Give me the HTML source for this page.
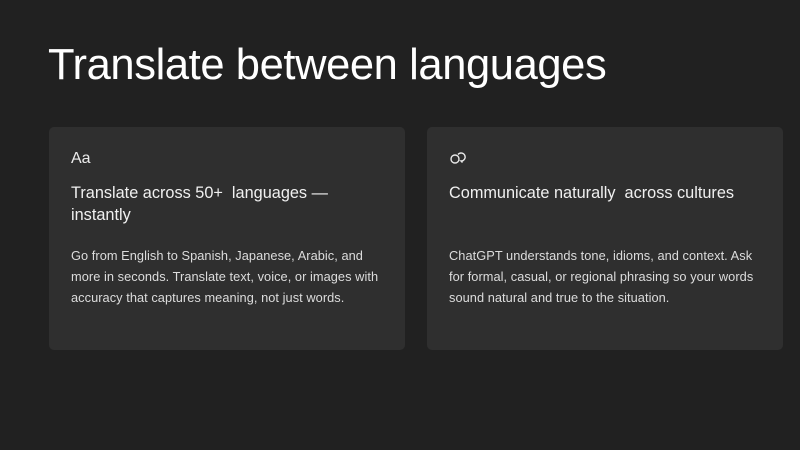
<!DOCTYPE html>
<html><head><style>
body{margin:0;width:800px;height:450px;background:#212121;font-family:"Liberation Sans",sans-serif;color:#ececec;overflow:hidden;position:relative}
h1{position:absolute;left:48px;top:39px;margin:0;font-size:43.5px;font-weight:400;letter-spacing:-0.4px;color:#fff;line-height:52px}
.card{position:absolute;top:127px;width:356px;height:223px;background:#2f2f2f;border-radius:5px}
.icon{position:absolute;left:22px;top:22px;font-size:16px;line-height:20px}
.h{position:absolute;left:22px;top:55px;width:300px;font-size:16.3px;line-height:22px;color:#f0f0f0}
.p{position:absolute;left:22px;top:118px;width:340px;white-space:nowrap;font-size:12.8px;line-height:21px;color:#dcdcdc;letter-spacing:0.05px}
</style></head><body>
<h1>Translate between languages</h1>
<div class="card" style="left:49px">
<div class="icon">Aa</div>
<div class="h">Translate across 50+&nbsp; languages — instantly</div>
<div class="p">Go from English to Spanish, Japanese, Arabic, and<br>more in seconds. Translate text, voice, or images with<br>accuracy that captures meaning, not just words.</div>
</div>
<div class="card" style="left:427px">
<svg style="position:absolute;left:22px;top:24px" width="18" height="14" viewBox="0 0 18 14" fill="none" stroke="#e8e8e8" stroke-width="1.4"><circle cx="6" cy="8" r="4"/><path d="M9 3.5a4 4 0 1 1 3 6.5l1.5 1.5"/></svg>
<div class="h">Communicate naturally&nbsp; across cultures</div>
<div class="p">ChatGPT understands tone, idioms, and context. Ask<br>for formal, casual, or regional phrasing so your words<br>sound natural and true to the situation.</div>
</div>
</body></html>
